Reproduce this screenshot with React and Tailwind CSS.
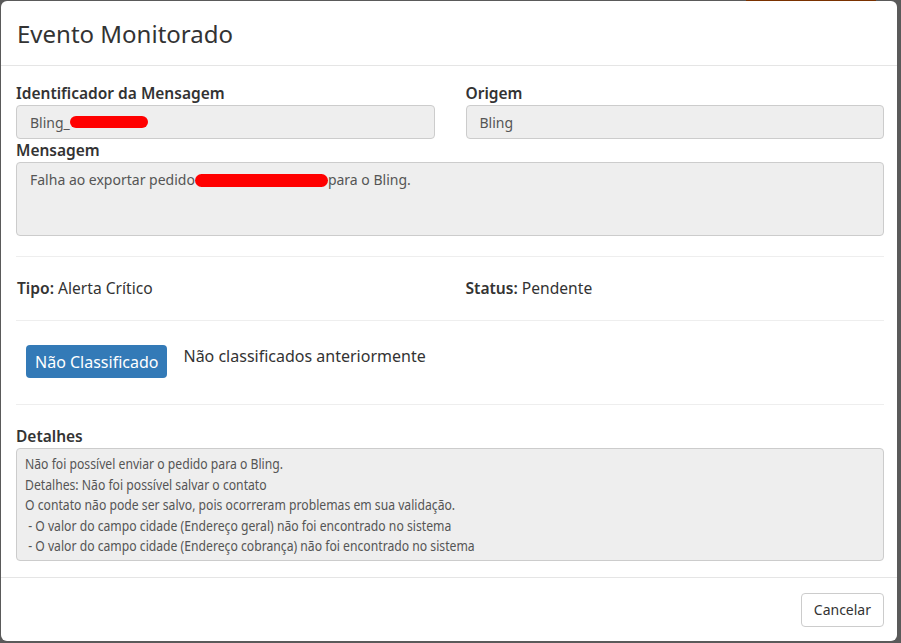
import React from "react";

const font = { fontFamily: '"Noto Sans", "Open Sans", sans-serif' };

function Redact({ w, h }) {
  return <span className={`inline-block rounded-full bg-[#ff0000] align-middle ${w} ${h}`} />;
}

export default function App() {
  return (
    <div className="relative w-[901px] h-[643px] overflow-hidden bg-[#5a5a5a]" style={font}>
      <div className="absolute left-[746px] top-0 w-[130px] h-[3px] bg-[#7a3200]" />
      <div className="absolute left-[1px] top-[1px] w-[896px] h-[640px] bg-white rounded-[6px] flex flex-col text-[#333]">
        {/* header */}
        <div className="h-[65px] shrink-0 border-b border-[#e5e5e5] flex items-center pl-[16px] pt-[2px]">
          <h4 className="text-[24px] leading-[30px] text-[#333] font-normal">Evento Monitorado</h4>
        </div>
        {/* body */}
        <div className="flex-1 pl-[15px] pr-[13px] pt-[17px]">
          <div className="grid grid-cols-2 gap-x-[31px]">
            <div>
              <div className="text-[15.5px] leading-[21px] font-semibold">Identificador da Mensagem</div>
              <div className="mt-[1px] h-[34px] rounded-[4px] border border-[#ccc] bg-[#eee] pl-[13px] flex items-center text-[14px] text-[#555]">
                <span>Bling_</span>
                <Redact w="w-[78px]" h="h-[12px]" />
              </div>
            </div>
            <div>
              <div className="text-[15.5px] leading-[21px] font-semibold">Origem</div>
              <div className="mt-[1px] h-[34px] rounded-[4px] border border-[#ccc] bg-[#eee] pl-[13px] flex items-center text-[14px] text-[#555]">
                Bling
              </div>
            </div>
          </div>
          <div className="mt-[1px] text-[15.5px] leading-[21px] font-semibold">Mensagem</div>
          <div className="mt-[1px] h-[74px] rounded-[4px] border border-[#ccc] bg-[#eee] pl-[13px] pt-[7px] text-[14px] leading-[20px] text-[#555]">
            <span className="inline-flex items-center">
              Falha ao exportar pedido
              <Redact w="w-[133px]" h="h-[13px]" />
              para o Bling.
            </span>
          </div>
          <div className="mt-[20px] border-t border-[#eee]" />
          <div className="h-[63px] grid grid-cols-2 gap-x-[31px] items-center text-[15.6px]">
            <div className="pl-[1px]"><span className="font-semibold">Tipo:</span> Alerta Crítico</div>
            <div><span className="font-semibold">Status:</span> Pendente</div>
          </div>
          <div className="border-t border-[#eee]" />
          <div className="h-[83px] pt-[24px] pl-[10px] flex items-start gap-[16px]">
            <div className="h-[33px] px-[9px] rounded-[4px] bg-[#337ab7] text-white text-[16px] flex items-center">
              Não Classificado
            </div>
            <div className="text-[16px] leading-[22px] text-[#333]">Não classificados anteriormente</div>
          </div>
          <div className="border-t border-[#eee]" />
          <div className="mt-[21px] text-[15.5px] leading-[21px] font-semibold">Detalhes</div>
          <div className="mt-[1px] h-[113px] rounded-[4px] border border-[#ccc] bg-[#eee] pl-[8px] pt-[5px] text-[14px] leading-[20.5px] text-[#555] whitespace-pre">
            <div className="origin-left scale-x-[0.87]">
              <div>Não foi possível enviar o pedido para o Bling.</div>
              <div>Detalhes: Não foi possível salvar o contato</div>
              <div>O contato não pode ser salvo, pois ocorreram problemas em sua validação.</div>
              <div> - O valor do campo cidade (Endereço geral) não foi encontrado no sistema</div>
              <div> - O valor do campo cidade (Endereço cobrança) não foi encontrado no sistema</div>
            </div>
          </div>
        </div>
        {/* footer */}
        <div className="h-[64px] shrink-0 border-t border-[#e5e5e5] flex items-center justify-end pr-[13px]">
          <div className="h-[34px] px-[12px] rounded-[4px] border border-[#ccc] bg-white text-[14px] text-[#333] flex items-center">
            Cancelar
          </div>
        </div>
      </div>
    </div>
  );
}
